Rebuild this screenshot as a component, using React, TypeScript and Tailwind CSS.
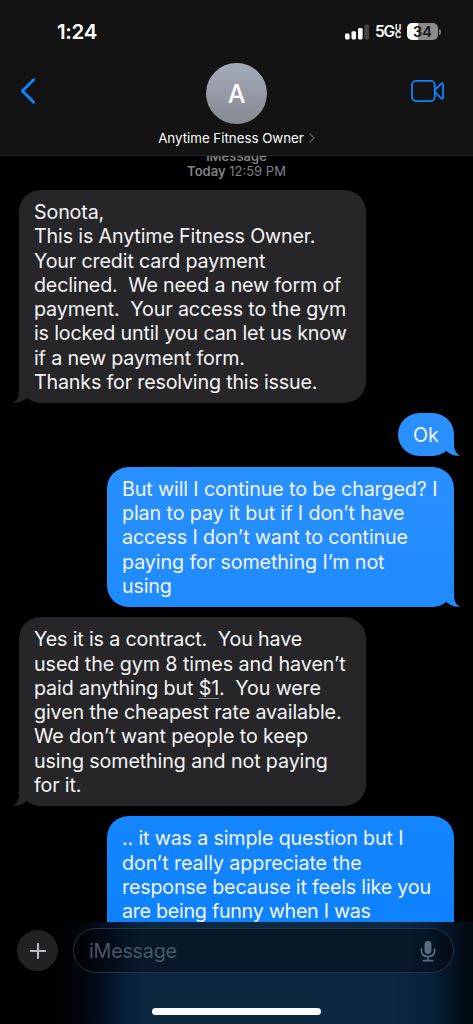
import clsx from "clsx";
import type { ReactNode } from "react";

type Line = { text: ReactNode; className?: string };
type Message = { id: number; mine: boolean; color: string; size: string; lines: Line[] };

const messages: Message[] = [
  {
    id: 1,
    mine: false,
    color: "bg-[#262629] text-[#262629]",
    size: "w-[347px]",
    lines: [
      { text: "Sonota," },
      { text: "This is Anytime Fitness Owner." },
      { text: "Your credit card payment" },
      { text: "declined.  We need a new form of", className: "tracking-[-0.18px]" },
      { text: "payment.  Your access to the gym", className: "tracking-[-0.13px]" },
      { text: "is locked until you can let us know" },
      { text: "if a new payment form." },
      { text: "Thanks for resolving this issue.", className: "tracking-[-0.18px]" },
    ],
  },
  {
    id: 2,
    mine: true,
    color: "bg-[#2b90ff] text-[#2b90ff]",
    size: "w-[56px]",
    lines: [{ text: "Ok" }],
  },
  {
    id: 3,
    mine: true,
    color: "bg-linear-to-b from-[#2990ff] to-[#1f8bff] text-[#1f8bff]",
    size: "w-[347px]",
    lines: [
      { text: "But will I continue to be charged? I", className: "tracking-[-0.12px]" },
      { text: "plan to pay it but if I don’t have", className: "tracking-[-0.11px]" },
      { text: "access I don’t want to continue", className: "tracking-[-0.12px]" },
      { text: "paying for something I’m not", className: "tracking-[-0.1px]" },
      { text: "using" },
    ],
  },
  {
    id: 4,
    mine: false,
    color: "bg-[#262629] text-[#262629]",
    size: "w-[347px]",
    lines: [
      { text: "Yes it is a contract.  You have" },
      { text: "used the gym 8 times and haven’t", className: "tracking-[-0.06px]" },
      {
        text: (
          <>
            paid anything but{" "}
            <span className="underline decoration-[#85858a] decoration-1 underline-offset-[3px]">$1</span>.  You were
          </>
        ),
        className: "tracking-[-0.14px]",
      },
      { text: "given the cheapest rate available.", className: "tracking-[-0.13px]" },
      { text: "We don’t want people to keep", className: "tracking-[-0.1px]" },
      { text: "using something and not paying", className: "tracking-[-0.12px]" },
      { text: "for it." },
    ],
  },
  {
    id: 5,
    mine: true,
    color: "bg-linear-to-b from-[#1485ff] to-[#0a81ff] text-[#0a81ff]",
    // runs on under the composer
    size: "w-[347px] h-[164px]",
    lines: [
      { text: ".. it was a simple question but I" },
      { text: "don’t really appreciate the", className: "tracking-[-0.09px]" },
      { text: "response because it feels like you", className: "tracking-[-0.18px]" },
      { text: "are being funny when I was", className: "tracking-[-0.28px]" },
    ],
  },
];

function Tail({ mine }: { mine: boolean }) {
  return (
    <svg
      viewBox="0 0 16 20"
      className={clsx("absolute bottom-0 h-5 w-4", mine ? "-right-[6px]" : "-left-[6px] -scale-x-100")}
      fill="currentColor"
    >
      <path d="M0 0H10V7C10 13 11.5 17.5 16 19.5C12 20.6 6.5 18.5 2.5 15.2Z" />
    </svg>
  );
}

function Bubble({ message }: { message: Message }) {
  return (
    <div
      className={clsx(
        "relative rounded-[21.5px] pt-[10px] pb-[8.7px] pl-[15px]",
        message.color,
        message.size,
        message.mine && "self-end"
      )}
    >
      <Tail mine={message.mine} />
      <div className="relative text-[19.7px] leading-[24.25px] tracking-[-0.15px] text-[#f4f4f6]">
        {message.lines.map((line, i) => (
          <p key={i} className={clsx("whitespace-pre", line.className)}>
            {line.text}
          </p>
        ))}
      </div>
    </div>
  );
}

function StatusBar() {
  return (
    <div className="flex h-[62px] items-start justify-between pr-[32px] pl-[57px]">
      <span className="mt-[19px] text-[20.5px] leading-[25px] font-semibold tracking-[-0.3px]">1:24</span>
      <div className="mt-[23px] flex h-[17px] items-center">
        <svg viewBox="0 0 24 16" className="h-4 w-6" fill="white">
          <rect x="0" y="9.5" width="4.6" height="6" rx="1.4" />
          <rect x="6.5" y="7.2" width="4.6" height="8.3" rx="1.4" />
          <rect x="13" y="4" width="4.6" height="11.5" rx="1.4" />
          <rect x="19.4" y="0.5" width="4.6" height="15" rx="1.4" fill="#444" />
        </svg>
        <span className="ml-[6px] w-[20px] text-[15.5px] leading-[17px] font-semibold tracking-[-1.3px]">5G</span>
        <span className="flex w-[7px] flex-col text-[8.5px] leading-[7px] font-bold">
          <span>U</span>
          <span>C</span>
        </span>
        <div className="ml-[5px] flex h-[17px] w-[31px] items-center justify-center rounded-[5px] bg-linear-to-r from-white from-36% to-[#8b8b8b] to-36% text-[14.5px] leading-[17px] font-semibold text-[#141414]">
          34
        </div>
        <div className="ml-px h-[6px] w-[2px] rounded-r-full bg-[#777]" />
      </div>
    </div>
  );
}

function Header() {
  return (
    <header className="h-[156px] shrink-0 border-b border-[#262626] bg-[#131313]">
      <StatusBar />
      <div className="flex items-start justify-between pr-[28px] pl-[20px]">
        <svg viewBox="0 0 16 28" className="mt-[15px] h-7 w-4" fill="none" stroke="#0a84ff" strokeWidth="3">
          <path d="M13.6 2.8L2.4 14L13.6 25.2" strokeLinecap="round" strokeLinejoin="round" />
        </svg>
        <div className="ml-[26px] flex w-[180px] flex-col items-center">
          <div className="mt-[0.5px] flex size-[61px] items-center justify-center rounded-full bg-linear-to-b from-[#a6abb9] to-[#858992] text-[25px] font-medium">
            <span className="mt-[4px]">A</span>
          </div>
          <div className="mt-[6.5px] flex items-center text-[13.3px] leading-4 whitespace-nowrap">
            Anytime Fitness Owner
            <svg viewBox="0 0 6 10" className="ml-[5px] h-[10px] w-[6px]" fill="none" stroke="#5c5c60" strokeWidth="1.4">
              <path d="M1 1L5 5L1 9" strokeLinecap="round" strokeLinejoin="round" />
            </svg>
          </div>
        </div>
        <svg viewBox="0 0 34 24" className="mt-[17px] h-6 w-[34px]" fill="none" stroke="#0a84ff" strokeWidth="1.8">
          <rect x="1" y="1.9" width="22.8" height="20.2" rx="4" />
          <path d="M23.8 11L30.4 4.7Q32.1 3.6 32.1 5.3V18.7Q32.1 20.4 30.4 19.3L23.8 13" strokeLinejoin="round" />
        </svg>
      </div>
    </header>
  );
}

function Composer() {
  return (
    <footer className="h-[102px] shrink-0 bg-[linear-gradient(to_right,#000_55px,#02060c_85px,#041225_108px,#08213b_130px,#0c2740_152px,#0c2740_395px,#08213a_430px,#03111f_455px,#010810_473px)]">
      <div className="flex items-center gap-[15px] pt-[6px] pl-[17px]">
        <button className="flex size-[41px] items-center justify-center rounded-full bg-[#222224]">
          <svg viewBox="0 0 16 16" className="size-4" stroke="#b9b9bd" strokeWidth="2.1" strokeLinecap="round">
            <path d="M8 1V15M1 8H15" />
          </svg>
        </button>
        <div className="flex h-[45px] w-[381px] items-center justify-between rounded-full border border-[#27333d] bg-black/35 pr-[17px] pl-[15px]">
          <span className="mt-[2px] text-[19.7px] tracking-[-0.2px] text-[#4c5662]">iMessage</span>
          <svg viewBox="0 0 16 22" className="h-[22px] w-4" fill="none" stroke="#5b6c80" strokeWidth="1.7" strokeLinecap="round">
            <rect x="4.6" y="1" width="6.8" height="13" rx="3.4" fill="#5b6c80" stroke="none" />
            <path d="M1.4 9V10.5C1.4 14.5 4.2 16.5 8 16.5S14.6 14.5 14.6 10.5V9M8 16.5V20.4M3.5 20.6H12.5" />
          </svg>
        </div>
      </div>
      <div className="mt-[35px] ml-[152px] h-[7px] w-[169px] rounded-full bg-white" />
    </footer>
  );
}

export default function App() {
  return (
    <div className="flex h-[1024px] w-[473px] flex-col overflow-hidden bg-black font-['Inter',sans-serif] text-white">
      <Header />
      <main className="flex min-h-0 flex-1 flex-col overflow-hidden">
        <div className="-mt-[7px] h-[41px] shrink-0 text-center text-[13px] leading-[15px] text-[#808085]">
          <p className="font-semibold">iMessage</p>
          <p>
            <span className="font-semibold">Today</span> 12:59 PM
          </p>
        </div>
        <div className="flex flex-col gap-[10.6px] pr-[19px] pl-[19px]">
          {messages.map((message) => (
            <Bubble key={message.id} message={message} />
          ))}
        </div>
      </main>
      <Composer />
    </div>
  );
}
